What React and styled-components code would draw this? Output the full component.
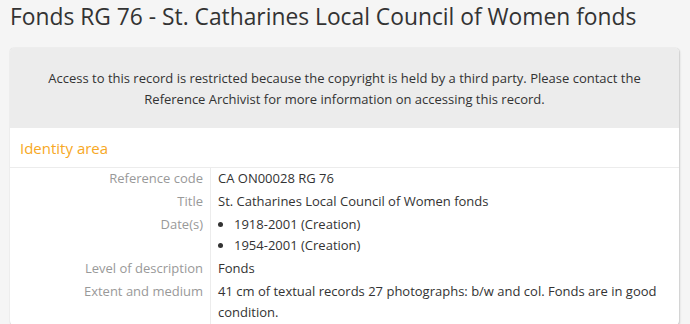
import styled, { createGlobalStyle } from "styled-components";

const GlobalStyle = createGlobalStyle`
  body {
    margin: 0;
    background: #f5f5f5;
    font-family: "Open Sans", "Liberation Sans", sans-serif;
    color: #333;
  }
`;

const Page = styled.div`
  padding: 0 11px 0 10px;
`;

const Heading = styled.h1`
  margin: 0;
  padding-top: 1px;
  font-size: 22.8px;
  font-weight: 400;
  line-height: 32px;
  color: #333;
`;

const Card = styled.div`
  margin-top: 15px;
  background: #fff;
  border-radius: 4px;
  box-shadow: 0 0 1px rgba(0, 0, 0, 0.25), 1px 1px 2px rgba(0, 0, 0, 0.15);
  overflow: hidden;
`;

const Notice = styled.div`
  background: #ececec;
  padding: 20px 30px 18px;
  text-align: center;
  font-size: 13px;
  line-height: 21px;
  color: #333;
`;

const SectionTitle = styled.h2`
  margin: 0;
  padding: 10px 10px 9px;
  font-size: 15px;
  font-weight: 400;
  line-height: 20px;
  color: #f7a824;
  border-bottom: 1px solid #ececec;
`;

const Row = styled.div`
  display: grid;
  grid-template-columns: 201px 1fr;
  font-size: 13px;
  line-height: 21px;
`;

const Label = styled.div`
  padding: 0 7px 2px 0;
  text-align: right;
  color: #999;
  border-right: 1px solid #ececec;
`;

const Value = styled.div`
  padding: 0 20px 2px 7px;
  color: #333;
`;

const DateList = styled.ul`
  margin: 0;
  padding-left: 16px;
`;

const rows = [
  { label: "Reference code", value: "CA ON00028 RG 76" },
  { label: "Title", value: "St. Catharines Local Council of Women fonds" },
  { label: "Date(s)", dates: ["1918-2001 (Creation)", "1954-2001 (Creation)"] },
  { label: "Level of description", value: "Fonds" },
  {
    label: "Extent and medium",
    value:
      "41 cm of textual records 27 photographs: b/w and col. Fonds are in good condition.",
  },
];

export default function App() {
  return (
    <Page>
      <GlobalStyle />
      <Heading>Fonds RG 76 - St. Catharines Local Council of Women fonds</Heading>
      <Card>
        <Notice>
          Access to this record is restricted because the copyright is held by a
          third party. Please contact the Reference Archivist for more
          information on accessing this record.
        </Notice>
        <SectionTitle>Identity area</SectionTitle>
        {rows.map((r) => (
          <Row key={r.label}>
            <Label>{r.label}</Label>
            <Value>
              {r.dates ? (
                <DateList>
                  {r.dates.map((d) => (
                    <li key={d}>{d}</li>
                  ))}
                </DateList>
              ) : (
                r.value
              )}
            </Value>
          </Row>
        ))}
      </Card>
    </Page>
  );
}
